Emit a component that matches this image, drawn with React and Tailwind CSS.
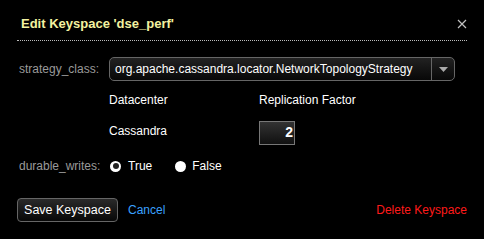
export default function App() {
  return (
    <div className="w-[484px] h-[239px] bg-black text-white font-['Liberation_Sans',Arial,sans-serif] text-[12px] overflow-hidden">
      {/* Header */}
      <div className="flex items-center justify-between pl-[21px] pr-[17px] pt-[14px] h-[34px]">
        <h1 className="text-[13px] font-bold text-[#f3f2a0]">Edit Keyspace 'dse_perf'</h1>
        <button className="text-[#bbb] text-[16px] leading-none">
          <svg width="10" height="10" viewBox="0 0 10 10" stroke="#c0c0c0" strokeWidth="1.2">
            <path d="M1 1L9 9M9 1L1 9" />
          </svg>
        </button>
      </div>
      <div className="mx-[17px] mt-[6px] border-t border-dotted border-[#bbb]" />

      {/* Form */}
      <div className="pl-[19px] pr-[29px] pt-[16px]">
        <div className="flex items-center h-[24px]">
          <label className="w-[90px] text-[12px] text-[#9a9a9a]">strategy_class:</label>
          <div className="flex-1 min-w-0 flex items-stretch h-[24px] rounded-[5px] border border-[#666] bg-gradient-to-b from-[#222] to-[#080808]">
            <span className="flex-1 px-[5px] flex items-center text-[12px] text-white whitespace-nowrap overflow-hidden">
              org.apache.cassandra.locator.NetworkTopologyStrategy
            </span>
            <span className="w-[23px] border-l border-[#666] flex items-center justify-center">
              <svg width="9" height="5" viewBox="0 0 9 5">
                <path d="M0 0H9L4.5 5Z" fill="#aaa" />
              </svg>
            </span>
          </div>
        </div>

        <div className="flex items-center mt-[7px] h-[24px] pl-[90px] text-[12px]">
          <span className="w-[150px]">Datacenter</span>
          <span>Replication Factor</span>
        </div>

        <div className="flex items-center mt-[5px] h-[27px] pl-[90px] text-[12px]">
          <span className="w-[150px]">Cassandra</span>
          <div className="w-[36px] h-[24px] mt-[4px] border border-[#777] bg-gradient-to-b from-[#333] to-[#111] flex items-center justify-end pr-[1px] text-[14px] font-bold">
            2
          </div>
        </div>

        <div className="flex items-center mt-[12px] h-[20px]">
          <label className="w-[91px] text-[12px] text-[#9a9a9a]">durable_writes:</label>
          <div className="flex items-center gap-[7px]">
            <span className="w-[11px] h-[11px] rounded-full bg-white flex items-center justify-center">
              <span className="w-[6px] h-[6px] rounded-full bg-[#222]" />
            </span>
            <span className="text-[12px]">True</span>
          </div>
          <div className="flex items-center gap-[6px] ml-[23px]">
            <span className="w-[11px] h-[11px] rounded-full bg-white" />
            <span className="text-[12px]">False</span>
          </div>
        </div>
      </div>

      {/* Footer */}
      <div className="flex items-center pl-[17px] pr-[17px] mt-[22px]">
        <button className="h-[24px] w-[101px] rounded-[4px] border border-[#666] bg-gradient-to-b from-[#2a2a2a] to-[#080808] text-[12.5px] text-white">
          Save Keyspace
        </button>
        <a className="ml-[10px] text-[12px] text-[#3aa0ff]">Cancel</a>
        <a className="ml-auto text-[12px] text-[#ff1a1a]">Delete Keyspace</a>
      </div>
    </div>
  );
}
